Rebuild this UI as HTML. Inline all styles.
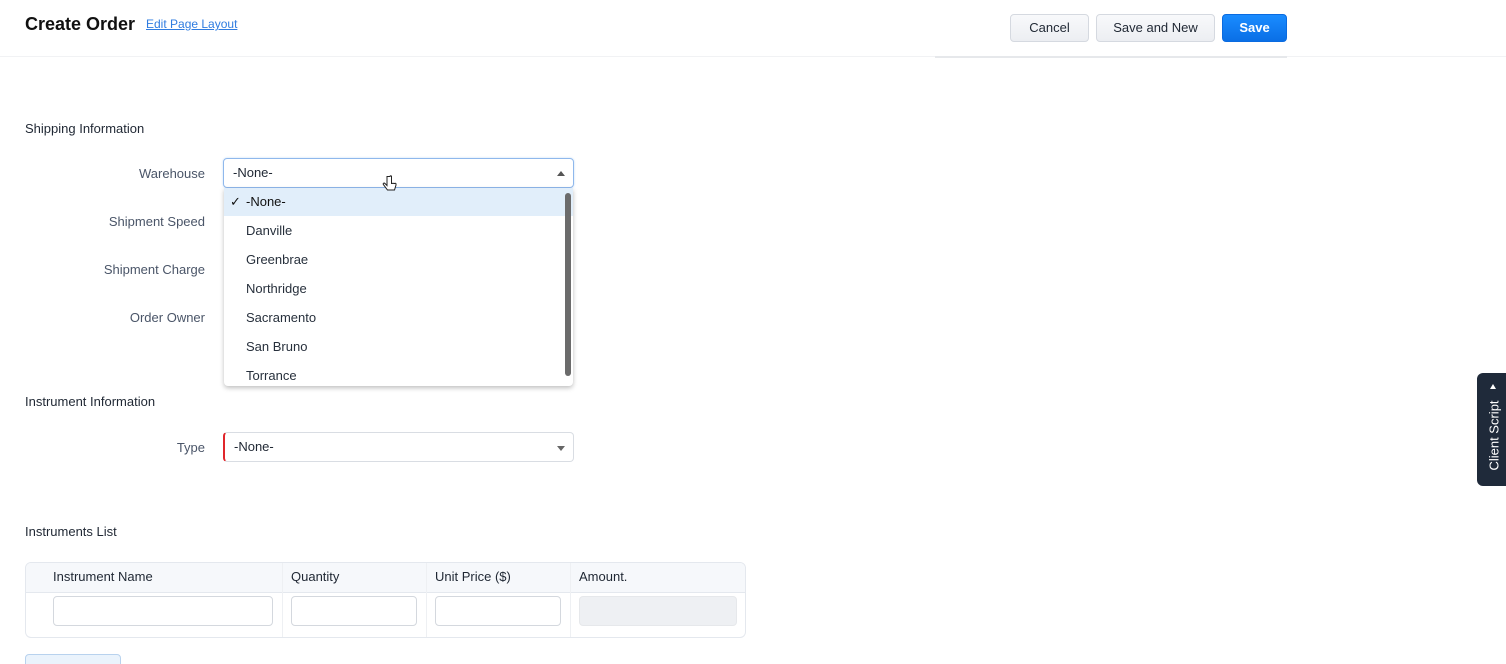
<!DOCTYPE html>
<html><head><meta charset="utf-8"><style>
*{box-sizing:border-box;margin:0;padding:0}
html,body{width:1506px;height:664px;overflow:hidden}
body{background:#fff;font-family:"Liberation Sans",sans-serif;color:#1f2733;position:relative}
.a{position:absolute}
.btn{position:absolute;top:14px;height:28px;border:1px solid #d5d9e0;border-radius:4px;background:linear-gradient(#f8f9fb,#eceef2);font-size:13px;text-align:center;line-height:26px;color:#1f2733}
.sec{position:absolute;left:25px;font-size:13px;color:#1f2733}
.lbl{position:absolute;width:180px;left:25px;text-align:right;font-size:13px;color:#4a5568}
.sel{position:absolute;left:223px;width:351px;height:30px;border:1px solid #d9dde3;border-radius:4px;font-size:13px;line-height:28px;padding-left:9px}
.tri{position:absolute;right:8px;top:12px;width:0;height:0;border-left:4px solid transparent;border-right:4px solid transparent}
.opt{position:absolute;left:22px;font-size:13px;color:#27303c}
.inp{position:absolute;top:596px;height:30px;border:1px solid #d4d8de;border-radius:4px;background:#fff}
.th{position:absolute;top:569px;font-size:13px;color:#1f2733}
</style></head><body>
<div class="a" style="left:25px;top:14px;font-size:18px;font-weight:bold;color:#111">Create Order</div>
<div class="a" style="left:146px;top:17px;font-size:12px;color:#2f7ce0;text-decoration:underline">Edit Page Layout</div>
<div class="a" style="left:0;top:56px;width:1506px;height:1px;background:#f1f2f4"></div>
<div class="a" style="left:935px;top:56px;width:352px;height:2px;background:#e6e8eb"></div>
<div class="btn" style="left:1010px;width:79px">Cancel</div>
<div class="btn" style="left:1096px;width:119px">Save and New</div>
<div class="btn" style="left:1222px;width:65px;background:linear-gradient(#1a8cff,#0a6fe6);border-color:#0a6be0;color:#fff;font-weight:bold">Save</div>

<div class="sec" style="top:121px">Shipping Information</div>
<div class="lbl" style="top:166px">Warehouse</div>
<div class="lbl" style="top:214px">Shipment Speed</div>
<div class="lbl" style="top:262px">Shipment Charge</div>
<div class="lbl" style="top:310px">Order Owner</div>
<div class="sel" style="top:158px;border-color:#8fb8ec;box-shadow:0 0 2px #c4dcf7">-None-<div class="tri" style="border-bottom:5px solid #555"></div></div>

<div class="a" style="left:224px;top:188px;width:349px;height:198px;background:#fff;border-radius:0 0 4px 4px;box-shadow:0 2px 5px rgba(0,0,0,.25);overflow:hidden">
 <div class="a" style="left:0;top:0;width:349px;height:28px;background:#e1eefa"></div>
 <div class="opt" style="left:6px;top:6px;color:#111">✓</div>
 <div class="opt" style="top:6px;color:#111">-None-</div>
 <div class="opt" style="top:35px">Danville</div>
 <div class="opt" style="top:64px">Greenbrae</div>
 <div class="opt" style="top:93px">Northridge</div>
 <div class="opt" style="top:122px">Sacramento</div>
 <div class="opt" style="top:151px">San Bruno</div>
 <div class="opt" style="top:180px">Torrance</div>
 <div class="a" style="left:341px;top:5px;width:6px;height:183px;background:#6b6b6b;border-radius:3px"></div>
</div>
<svg class="a" style="left:382px;top:175px" width="16" height="18" viewBox="0 0 16 18"><path d="M5 1.5v9l-2-2c-1-1-2.5 0-1.5 1.2l4 5.3h7l1.5-5V9c0-1-1.5-1-1.5 0 0-1-1.5-1-1.5 0 0-1-1.5-1-1.5 0V1.5c0-1-1.5-1-1.5 0z" fill="#fff" stroke="#222" stroke-width="1"/></svg>

<div class="sec" style="top:394px">Instrument Information</div>
<div class="lbl" style="top:440px">Type</div>
<div class="sel" style="top:432px;border-left:2px solid #e0262b">-None-<div class="tri" style="top:13px;border-top:5px solid #666"></div></div>

<div class="sec" style="top:524px">Instruments List</div>
<div class="a" style="left:25px;top:562px;width:721px;height:76px;border:1px solid #e4e8ee;border-radius:6px;overflow:hidden">
 <div class="a" style="left:0;top:0;width:721px;height:30px;background:#f6f8fb;border-bottom:1px solid #e4e8ee"></div>
 <div class="a" style="left:256px;top:0;width:1px;height:76px;background:#eef0f3"></div>
 <div class="a" style="left:400px;top:0;width:1px;height:76px;background:#eef0f3"></div>
 <div class="a" style="left:544px;top:0;width:1px;height:76px;background:#eef0f3"></div>
</div>
<div class="th" style="left:53px">Instrument Name</div>
<div class="th" style="left:291px">Quantity</div>
<div class="th" style="left:435px">Unit Price ($)</div>
<div class="th" style="left:579px">Amount.</div>
<div class="inp" style="left:53px;width:220px"></div>
<div class="inp" style="left:291px;width:126px"></div>
<div class="inp" style="left:435px;width:126px"></div>
<div class="inp" style="left:579px;width:158px;background:#eef0f3;border-color:#e6e8eb"></div>
<div class="a" style="left:25px;top:654px;width:96px;height:20px;border:1px solid #b8d2ee;border-radius:4px;background:#eaf3fc"></div>

<div class="a" style="left:1477px;top:373px;width:34px;height:113px;background:#1f2a3a;border-radius:6px 0 0 6px"></div>
<div class="a" style="left:1490px;top:384px;width:0;height:0;border-left:3px solid transparent;border-right:3px solid transparent;border-bottom:5px solid #fff"></div>
<div class="a" style="left:1442px;top:428px;width:104px;transform:rotate(-90deg);color:#fff;font-size:13px;text-align:center">Client Script</div>
</body></html>
